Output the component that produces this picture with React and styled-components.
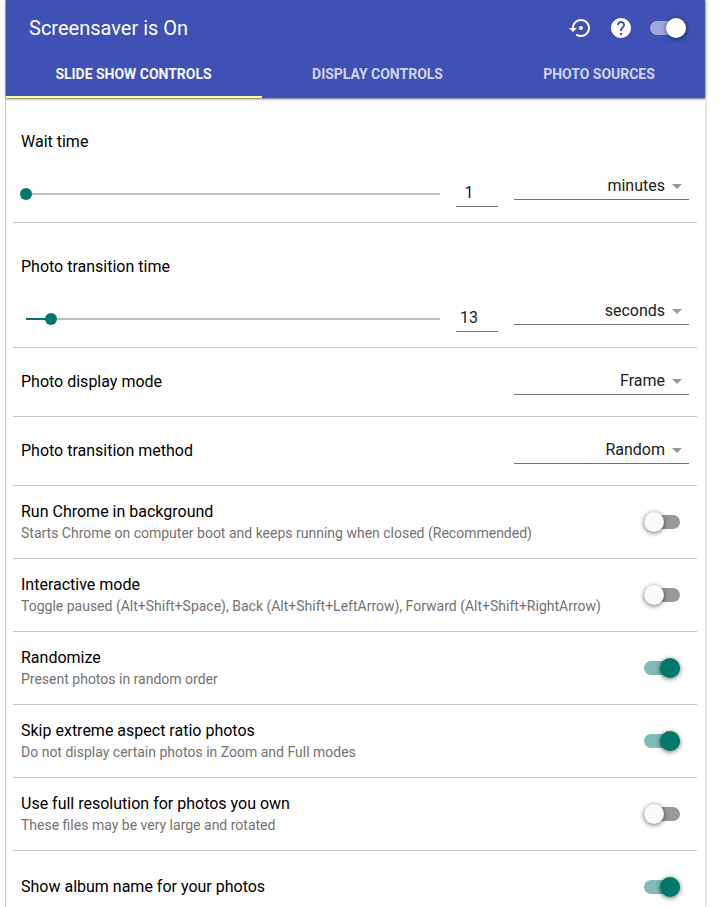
import React from "react";
import styled, { createGlobalStyle } from "styled-components";

const GlobalStyle = createGlobalStyle`
  * { box-sizing: border-box; }
  body {
    margin: 0;
    background: #fff;
    font-family: Roboto, "Noto Sans", sans-serif;
    overflow: hidden;
  }
`;

const Panel = styled.main`
  width: 700px;
  height: 907px;
  margin-left: 5px;
  border-left: 1px solid #c6c6c6;
  box-shadow: 1px 0 2px rgba(0, 0, 0, 0.2);
  overflow: clip;
  overflow-clip-margin: 6px;
  background: #fff;
`;

const Header = styled.header`
  height: 98px;
  background: #3f51b5;
  color: #fff;
  box-shadow: 0 1px 2px rgba(0, 0, 0, 0.6);
`;

const Toolbar = styled.div`
  height: 56px;
  padding: 0 19px 0 23px;
  display: flex;
  align-items: center;
`;

const Title = styled.h1`
  flex: 1;
  margin: 0;
  font-size: 20px;
  font-weight: 400;
  line-height: 28px;
`;

const ToolbarIcon = styled.svg`
  width: 24px;
  height: 24px;
  margin-right: ${(p) => p.$gap}px;
  fill: #fff;
`;

const Tabs = styled.nav`
  height: 42px;
  display: grid;
  grid-template-columns: 256px 230px 213px;
`;

const Tab = styled.div`
  display: flex;
  align-items: center;
  justify-content: center;
  border-bottom: 2px solid ${(p) => (p.$active ? "#ffff8d" : "transparent")};
  font-size: 14px;
  font-weight: 700;
  padding: 0 ${(p) => (p.$active ? 1 : 0)}px 4px ${(p) => (p.$active ? 0 : 1)}px;
  letter-spacing: -0.02px;
  color: ${(p) => (p.$active ? "#f5f6fb" : "#cfd3ec")};
  white-space: nowrap;
`;

const Rows = styled.div`
  margin: 0 8px 0 7px;
`;

const Row = styled.section`
  height: ${(p) => p.$height}px;
  padding: 0 8px;
  border-bottom: 1px solid #c8c8c8;
  display: flex;
  align-items: center;
  justify-content: space-between;
`;

const ChoiceRow = styled(Row)`
  align-items: flex-start;
  padding-top: 24px;
`;

const TimeRow = styled.section`
  height: 125px;
  padding: 34px 8px 0;
  border-bottom: 1px solid #c8c8c8;
`;

const Label = styled.div`
  font-size: 16px;
  line-height: 20px;
  color: #000;
  white-space: nowrap;
`;

const Hint = styled.div`
  margin: 1px 0;
  font-size: 14px;
  line-height: 20px;
  color: #737373;
  white-space: nowrap;
`;

const SwitchText = styled.div`
  padding-top: ${(p) => (p.$single ? 0 : 1)}px;
`;

const Controls = styled.div`
  margin-top: 24px;
  height: 33px;
  display: flex;
  align-items: flex-start;
`;

const Track = styled.div`
  width: 414px;
  height: 2px;
  margin: 17px 16px 0 5px;
  display: flex;
  align-items: center;
  background: #bdbdbd;
`;

const Progress = styled.div`
  flex: none;
  width: ${(p) => p.$width}px;
  height: 2px;
  background: #00796b;
`;

const Knob = styled.div`
  flex: none;
  width: 12px;
  height: 12px;
  margin-left: -6px;
  border-radius: 50%;
  background: #00796b;
`;

const NumberField = styled.div`
  width: 42px;
  height: 31px;
  margin-right: 16px;
  padding-right: 16px;
  border-bottom: 1px solid #737373;
  font-size: 16px;
  line-height: 34px;
  text-align: center;
  color: #212121;
`;

const SelectBox = styled.div`
  width: 175px;
  height: 24px;
  padding-right: 7px;
  display: flex;
  align-items: flex-start;
  justify-content: flex-end;
  border-bottom: 1px solid #737373;
  font-size: 16px;
  line-height: 20px;
  color: #212121;
`;

const ChoiceSelect = styled.div`
  margin-top: -1px;
`;

const Arrow = styled.svg`
  width: 10px;
  height: 5px;
  margin: 8px 0 0 7px;
  fill: #999;
`;

const Bar = styled.div`
  width: 36px;
  height: 14px;
  margin-right: ${(p) => p.$inset || 0}px;
  border-radius: 7px;
  display: flex;
  align-items: center;
  justify-content: ${(p) => (p.$on ? "flex-end" : "flex-start")};
  background: ${(p) => p.$bar};
`;

const Button = styled.div`
  flex: none;
  width: 20px;
  height: 20px;
  border-radius: 50%;
  background: ${(p) => p.$color};
  box-shadow: 0 1px 5px rgba(0, 0, 0, 0.6);
`;

function Select({ value }) {
  return (
    <SelectBox>
      {value}
      <Arrow viewBox="0 0 10 5"><path d="M0 0h10L5 5z" /></Arrow>
    </SelectBox>
  );
}

function Toggle({ on }) {
  return (
    <Bar $on={on} $inset={9} $bar={on ? "#80bcb5" : "#999"}>
      <Button $color={on ? "#00796b" : "#fafafa"} />
    </Bar>
  );
}

const times = [
  { label: "Wait time", progress: 0, value: 1, unit: "minutes" },
  { label: "Photo transition time", progress: 25, value: 13, unit: "seconds" },
];

const choices = [
  { label: "Photo display mode", value: "Frame" },
  { label: "Photo transition method", value: "Random" },
];

const switches = [
  { label: "Run Chrome in background", hint: "Starts Chrome on computer boot and keeps running when closed (Recommended)" },
  { label: "Interactive mode", hint: "Toggle paused (Alt+Shift+Space), Back (Alt+Shift+LeftArrow), Forward (Alt+Shift+RightArrow)" },
  { label: "Randomize", hint: "Present photos in random order", on: true },
  { label: "Skip extreme aspect ratio photos", hint: "Do not display certain photos in Zoom and Full modes", on: true },
  { label: "Use full resolution for photos you own", hint: "These files may be very large and rotated" },
  { label: "Show album name for your photos", on: true },
];

export default function App() {
  return (
    <>
      <GlobalStyle />
      <Panel>
        <Header>
          <Toolbar>
            <Title>Screensaver is On</Title>
            <ToolbarIcon $gap={16} viewBox="0 0 24 24">
              <path d="M14 12c0-1.1-.9-2-2-2s-2 .9-2 2 .9 2 2 2 2-.9 2-2zm-2-9c-4.97 0-9 4.03-9 9H0l4 4 4-4H5c0-3.87 3.13-7 7-7s7 3.13 7 7-3.13 7-7 7c-1.51 0-2.91-.49-4.06-1.3l-1.42 1.44C8.04 20.3 9.94 21 12 21c4.97 0 9-4.03 9-9s-4.03-9-9-9z" />
            </ToolbarIcon>
            <ToolbarIcon $gap={17} viewBox="0 0 24 24">
              <path d="M12 2C6.48 2 2 6.48 2 12s4.48 10 10 10 10-4.48 10-10S17.52 2 12 2zm1 17h-2v-2h2v2zm2.07-7.75l-.9.92C13.45 12.9 13 13.5 13 15h-2v-.5c0-1.1.45-2.1 1.17-2.83l1.24-1.26c.37-.36.59-.86.59-1.41 0-1.1-.9-2-2-2s-2 .9-2 2H8c0-2.21 1.79-4 4-4s4 1.79 4 4c0 .88-.36 1.68-.93 2.25z" />
            </ToolbarIcon>
            <Bar $on $bar="#9fa8da"><Button $color="#fff" /></Bar>
          </Toolbar>
          <Tabs>
            <Tab $active>SLIDE SHOW CONTROLS</Tab>
            <Tab>DISPLAY CONTROLS</Tab>
            <Tab>PHOTO SOURCES</Tab>
          </Tabs>
        </Header>
        <Rows>
          {times.map((t) => (
            <TimeRow key={t.label}>
              <Label>{t.label}</Label>
              <Controls>
                <Track><Progress $width={t.progress} /><Knob /></Track>
                <NumberField>{t.value}</NumberField>
                <Select value={t.unit} />
              </Controls>
            </TimeRow>
          ))}
          {choices.map((c) => (
            <ChoiceRow key={c.label} $height={69}>
              <Label>{c.label}</Label>
              <ChoiceSelect><Select value={c.value} /></ChoiceSelect>
            </ChoiceRow>
          ))}
          {switches.map((s) => (
            <Row key={s.label} $height={73}>
              <SwitchText $single={!s.hint}>
                <Label>{s.label}</Label>
                {s.hint && <Hint>{s.hint}</Hint>}
              </SwitchText>
              <Toggle on={s.on} />
            </Row>
          ))}
        </Rows>
      </Panel>
    </>
  );
}
